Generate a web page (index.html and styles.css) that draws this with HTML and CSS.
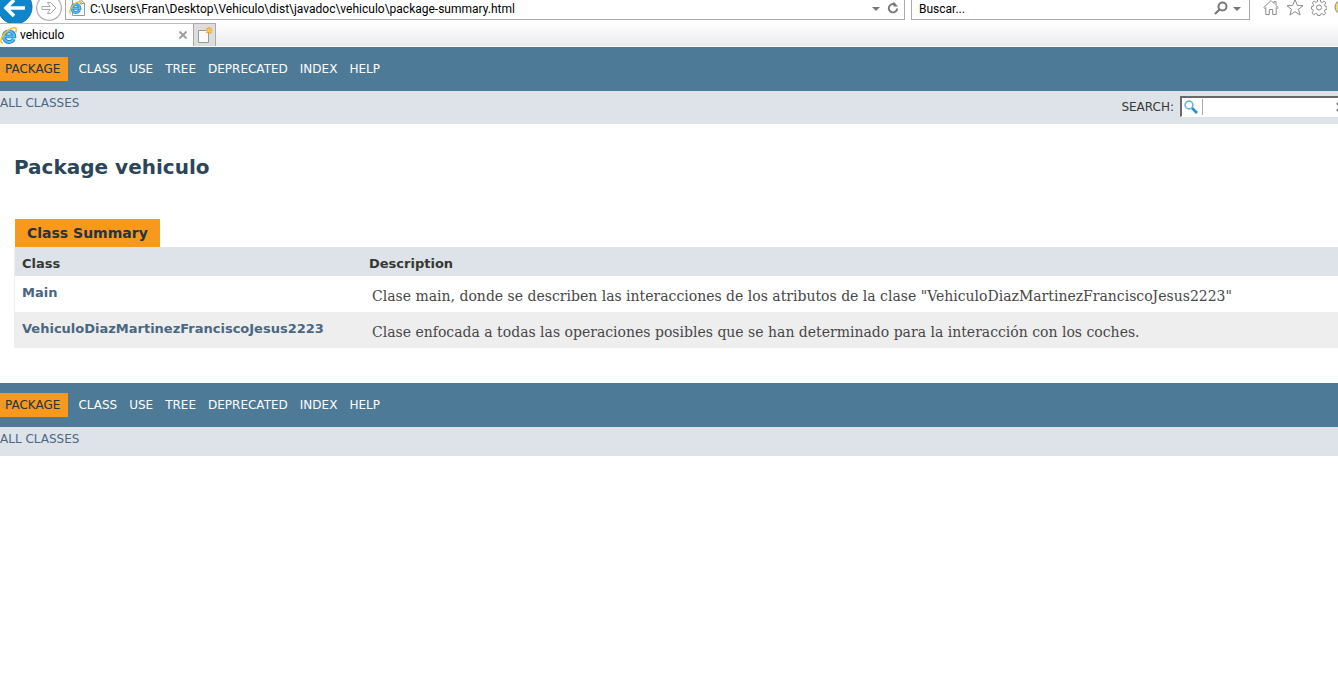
FILE: index.html
```html
<!DOCTYPE html>
<html lang="es">
<head>
<meta charset="utf-8">
<title>vehiculo</title>
<link rel="stylesheet" href="styles.css">
</head>
<body>
<svg class="defs" width="0" height="0" aria-hidden="true">
  <defs>
    <symbol id="ie" viewBox="0 0 16 16">
      <path d="M13 11.300A5 5 0 1 1 13.500 8.900H4.500" fill="none" stroke="#1f86cc" stroke-width="3.600"/>
      <path d="M13 11.300A5 5 0 1 1 13.500 8.900H4.500" fill="none" stroke="#58bdf0" stroke-width="1.800"/>
      <path d="M2.500 15.300C-1.500 14.500 2.500 6 8.500 2.500S16.500 1 14.700 5" fill="none" stroke="#f5c02c" stroke-width="1.500"/>
    </symbol>
  </defs>
</svg>

<header class="browser">
  <div class="toolbar">
    <button class="back" type="button" aria-label="Atrás">
      <svg width="36" height="23" viewBox="0 0 36 23"><circle cx="15" cy="7" r="17" fill="#0d86cb" stroke="#0a6fae"/><path d="M25 8H7M14 0 6 8l8 8" fill="none" stroke="#fff" stroke-width="3.6"/></svg>
    </button>
    <button class="forward" type="button" aria-label="Adelante">
      <svg width="26" height="23" viewBox="0 0 26 23"><circle cx="13" cy="8" r="12.4" fill="#fff" stroke="#b3b3b3" stroke-width="1.3"/><path d="M6 6.500H14L11.500 2.500H14.500L20 8 14.500 13.500H11.500L14 9.500H6Z" fill="#fff" stroke="#a9a9a9"/></svg>
    </button>
    <div class="box address">
      <svg width="18" height="16" viewBox="0 0 18 16" aria-hidden="true"><path d="M4.500-1H12L16.500 3V15.500H4.500Z" fill="#fff" stroke="#999"/><path d="M12-1V3.500H16.500" fill="none" stroke="#999"/><use href="#ie" x="1" y="1" width="13" height="13"/></svg>
      <input type="text" aria-label="Dirección" value="C:\Users\Fran\Desktop\Vehiculo\dist\javadoc\vehiculo\package-summary.html">
      <button type="button" aria-label="Historial"><svg width="8" height="16" viewBox="0 0 8 16"><path d="M0 7H8L4 11Z" fill="#777"/></svg></button>
      <button type="button" aria-label="Actualizar"><svg width="12" height="16" viewBox="0 0 12 16"><path d="M8 4.500A4.200 4.200 0 1 0 10.200 8.500" fill="none" stroke="#777" stroke-width="1.900"/><path d="M6.500 1.500 11 6.500H6.500Z" fill="#777"/></svg></button>
    </div>
    <div class="box find">
      <input type="text" aria-label="Buscar en la web" value="Buscar...">
      <button type="button" aria-label="Buscar"><svg width="14" height="16" viewBox="0 0 14 16"><circle cx="8.500" cy="6.500" r="4" fill="none" stroke="#777" stroke-width="2"/><path d="M5.500 9.500 1 14" stroke="#777" stroke-width="2.200"/></svg></button>
      <button type="button" aria-label="Proveedores"><svg width="8" height="16" viewBox="0 0 8 16"><path d="M0 7H8L4 11Z" fill="#777"/></svg></button>
    </div>
    <div class="tools">
      <button type="button" aria-label="Inicio"><svg width="16" height="16" viewBox="0 0 16 16"><path d="M.8 7.500 8 .5l3 3V1.500h2v4l2.200 2-1 1-1-1V14.500H9.700V9.500H6.300V14.500H2.800V7.500l-1 1Z" fill="#fff" stroke="#8c8c8c"/></svg></button>
      <button type="button" aria-label="Favoritos"><svg width="18" height="16" viewBox="0 0 18 16"><path d="M9-.5 11.300 5.500 17 5.700 12.500 9.300 14.100 15 9 11.700 3.900 15 5.500 9.300 1 5.700 6.700 5.500Z" fill="#fff" stroke="#8c8c8c"/></svg></button>
      <button type="button" aria-label="Herramientas"><svg width="16" height="16" viewBox="0 0 16 16"><path d="M6.700-.5h2.600l.4 2.300 1.500.6 1.900-1.300 1.800 1.800-1.300 1.900.6 1.500 1.800.4v2.600l-2 .4-.6 1.500 1.300 1.900-1.800 1.800-1.900-1.300-1.500.6-.4 1.300H6.700l-.4-1.500-1.500-.6-1.900 1.300-1.800-1.800 1.300-1.900-.6-1.500-1.300-.4V6.700l1.500-.4.600-1.500L1.300 2.900l1.800-1.800L5 2.400l1.300-.6Z" fill="#fff" stroke="#8c8c8c"/><circle cx="8" cy="7.500" r="2.500" fill="none" stroke="#8c8c8c"/></svg></button>
      <button type="button" aria-label="Comentarios"><svg width="16" height="16" viewBox="0 0 16 16"><circle cx="8" cy="7" r="7" fill="#f5dc62" stroke="#888"/></svg></button>
    </div>
  </div>
  <div class="tabs">
    <div class="tab">
      <svg width="17" height="17" aria-hidden="true"><use href="#ie" width="17" height="17"/></svg>
      <span>vehiculo</span>
      <button type="button" aria-label="Cerrar pestaña"><svg width="8" height="8" viewBox="0 0 8 8"><path d="M.5.5l7 7M7.500.5l-7 7" stroke="#a0a0a0" stroke-width="2"/></svg></button>
    </div>
    <button class="new-tab" type="button" aria-label="Nueva pestaña"><svg width="16" height="18" viewBox="0 0 16 18"><path d="M.5 4.500h10v12h-10Z" fill="#fafafa" stroke="#999"/><path d="M11 1v7M7.500 4.500h7M8.500 2l5 5M13.500 2l-5 5" stroke="#f0a01e" stroke-width="1.200"/><circle cx="11" cy="4.500" r="1.800" fill="#ffc94d"/></svg></button>
  </div>
</header>

<nav aria-label="Superior">
  <ul class="topnav">
    <li class="current">Package</li>
    <li><a href="#class">Class</a></li>
    <li><a href="#use">Use</a></li>
    <li><a href="#tree">Tree</a></li>
    <li><a href="#deprecated">Deprecated</a></li>
    <li><a href="#index">Index</a></li>
    <li><a href="#help">Help</a></li>
  </ul>
  <div class="subnav with-search">
    <a href="#all">All Classes</a>
    <div class="search">
      <label for="search">Search:</label>
      <div class="search-box">
        <svg width="14" height="14" viewBox="0 0 14 14" aria-hidden="true"><circle cx="5" cy="5" r="3.900" fill="#fff" stroke="#6fb5d8" stroke-width="1.600"/><path d="M8 8l5 5" stroke="#2a8fc8" stroke-width="2.600"/></svg>
        <input id="search" type="text">
        <button type="reset" aria-label="Borrar"><svg width="10" height="10" viewBox="0 0 10 10"><path d="M1 1l8 8M9 1 1 9" stroke="#777" stroke-width="2.400"/></svg></button>
      </div>
    </div>
  </div>
</nav>

<main>
  <h1>Package vehiculo</h1>
  <table>
    <caption><span>Class Summary</span></caption>
    <thead><tr><th scope="col">Class</th><th scope="col">Description</th></tr></thead>
    <tbody>
      <tr><th scope="row"><a href="#main">Main</a></th><td>Clase main, donde se describen las interacciones de los atributos de la clase "VehiculoDiazMartinezFranciscoJesus2223"</td></tr>
      <tr><th scope="row"><a href="#vehiculo">VehiculoDiazMartinezFranciscoJesus2223</a></th><td>Clase enfocada a todas las operaciones posibles que se han determinado para la interacción con los coches.</td></tr>
    </tbody>
  </table>
</main>

<nav aria-label="Inferior">
  <ul class="topnav">
    <li class="current">Package</li>
    <li><a href="#class">Class</a></li>
    <li><a href="#use">Use</a></li>
    <li><a href="#tree">Tree</a></li>
    <li><a href="#deprecated">Deprecated</a></li>
    <li><a href="#index">Index</a></li>
    <li><a href="#help">Help</a></li>
  </ul>
  <div class="subnav"><a href="#all">All Classes</a></div>
</nav>
</body>
</html>
```
FILE: styles.css
```css
* {
  box-sizing: border-box;
}

body {
  margin: 0;
  background: #fff;
  color: #353833;
  font-family: "DejaVu Sans", sans-serif;
  font-size: 14px;
  overflow-x: hidden;
}

a {
  color: #4a6782;
  text-decoration: none;
}

.defs {
  position: absolute;
}

/* Browser bar */
.browser {
  font-family: Roboto, sans-serif;
  font-size: 12px;
  color: #000;
  overflow: hidden;
  border-bottom: 1px solid #fff;
}

.browser svg {
  display: block;
}

.browser button,
.search-box button {
  flex: none;
  padding: 0;
  border: 0;
  background: none;
}

.browser input {
  flex: 1;
  min-width: 0;
  height: 17px;
  padding: 0;
  border: 0;
  background: none;
  color: inherit;
  font: inherit;
}

.toolbar {
  display: flex;
  align-items: flex-start;
  height: 23px;
}

.box {
  display: flex;
  align-items: flex-start;
  height: 20px;
  border: 1px solid #aaa;
  border-top: 0;
  background: #fff;
}

.address {
  flex: 1;
  margin-left: 3px;
  padding: 0 5px 0 2px;
  gap: 7px;
}

.address input {
  margin-left: -3px;
}

.find {
  width: 339px;
  margin-left: 6px;
  padding: 0 8px 0 7px;
  gap: 5px;
}

.tools {
  display: flex;
  gap: 7px;
  width: 88px;
  padding-left: 13px;
  overflow: hidden;
}

.tabs {
  display: flex;
  height: 23px;
  background: linear-gradient(#fff, #ebebeb);
}

.tab {
  display: flex;
  align-items: center;
  gap: 3px;
  width: 193px;
  padding-right: 6px;
  border-top: 1px solid #bbb;
  background: #fff;
}

.tab button {
  margin-left: auto;
}

.browser .new-tab {
  width: 23px;
  padding-left: 4px;
  border: 1px solid #aaa;
  border-bottom: 0;
  background: #ddd;
}

/* Documentation navigation */
.topnav {
  display: flex;
  align-items: center;
  gap: 12px;
  height: 44px;
  margin: 0;
  padding: 0;
  background: #4d7a97;
  color: #fff;
  font-size: 12px;
  line-height: 14px;
  list-style: none;
  text-transform: uppercase;
}

.topnav a {
  color: #fff;
}

.topnav .current {
  margin-right: -2px;
  padding: 5px 8px 5px 5px;
  background: #f8981d;
  color: #253441;
}

.subnav {
  display: flex;
  align-items: flex-start;
  justify-content: space-between;
  height: 29px;
  padding-top: 5px;
  background: #dee3e9;
  font-size: 12px;
  line-height: 14px;
  text-transform: uppercase;
}

.with-search {
  height: 33px;
}

.search {
  display: flex;
  align-items: center;
  gap: 6px;
  margin-right: -8px;
}

.search-box {
  display: flex;
  align-items: center;
  width: 166px;
  height: 21px;
  padding-left: 2px;
  border: 2px solid #696969;
  border-right: 0;
  border-bottom: 1px solid #fff;
  background: #fff;
}

.search-box input {
  flex: 1;
  min-width: 0;
  height: 16px;
  margin-left: 4px;
  border: 0;
  border-left: 1px solid #aaa;
  background: none;
  outline: 0;
}

/* Package content */
main {
  padding: 31px 0 35px 14px;
}

h1 {
  margin: 0 0 39px;
  color: #2c4557;
  font-size: 20px;
  line-height: 25px;
}

table {
  width: 100%;
  border-collapse: separate;
  border-spacing: 0;
  border-left: 1px solid #eee;
}

caption {
  padding-left: 1px;
  text-align: left;
}

caption span {
  display: inline-block;
  padding: 6px 12px;
  background: #f8981d;
  color: #253441;
  font-weight: bold;
  line-height: 16px;
  vertical-align: top;
}

th {
  padding: 9px 7px 4px;
  font-size: 13px;
  line-height: 16px;
  text-align: left;
  vertical-align: top;
}

thead tr {
  background: #dee3e9;
}

thead th:first-child {
  width: 347px;
}

tbody td {
  padding: 12px 10px 7px;
  color: #474747;
  font-family: "DejaVu Serif", serif;
  line-height: 17px;
  vertical-align: top;
}

tbody tr:nth-child(even) {
  background: #eeeeef;
}
```
